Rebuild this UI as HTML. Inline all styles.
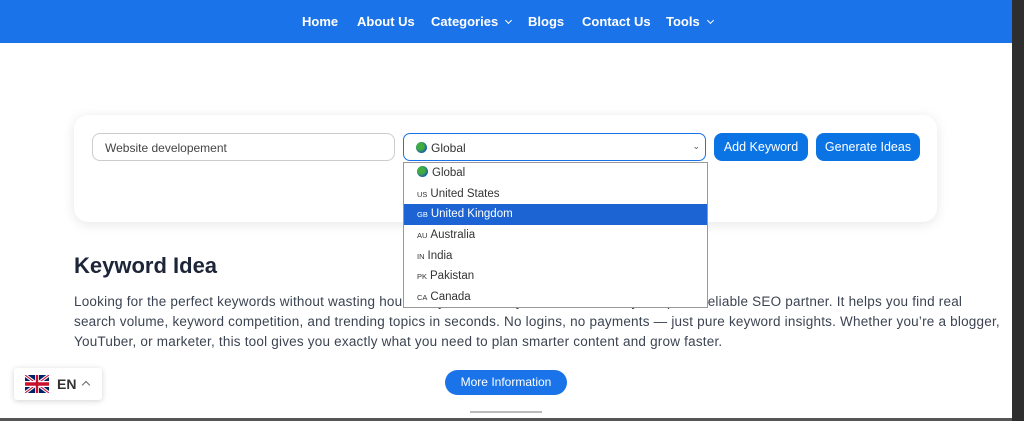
<!DOCTYPE html><html><head><style>
*{margin:0;padding:0;box-sizing:border-box}
body{width:1024px;height:421px;overflow:hidden;background:#fff;font-family:"Liberation Sans",sans-serif;position:relative}
.a{position:absolute}
.nav{left:0;top:0;width:1012px;height:43px;background:#1a73e8}
.ni{top:14px;color:#fff;font-size:13px;font-weight:bold;white-space:nowrap}
.chev{display:inline-block;width:5px;height:5px;border-right:1.2px solid #fff;border-bottom:1.2px solid #fff;transform:rotate(45deg);margin-left:8px;position:relative;top:-3px}
.card{left:74px;top:115px;width:863px;height:107px;border-radius:14px;background:#fff;box-shadow:0 2px 12px rgba(0,0,0,.1)}
.inp{left:92px;top:133px;width:303px;height:28px;border:1px solid #ccc;border-radius:8px;font-size:12px;color:#444;padding:7px 12px}
.sel{left:403px;top:133px;width:303px;height:28px;border:1.5px solid #1a73e8;border-radius:7px;font-size:12px;color:#333;padding:7px 12px}
.btn{top:133px;height:28px;background:#0b74e5;color:#fff;font-size:12.5px;border-radius:8px;text-align:center;line-height:28px}
.dd{left:403px;top:162px;width:305px;height:146px;border:1px solid #999;background:#fff}
.op{height:20.7px;font-size:11.5px;color:#333;padding-left:13px;line-height:20.7px}
.op small{font-size:7.5px;margin-right:3px}
.op.h{background:#1c64d3;color:#fff}
.globe{display:inline-block;width:11px;height:11px;border-radius:50%;background:radial-gradient(circle at 40% 40%,#3fae3f 35%,#1d5fa8 70%);vertical-align:-1px;margin-right:4px}
h1{left:74px;top:253px;font-size:22px;color:#1d2639;font-weight:bold}
.p{left:74px;top:292px;width:935px;font-size:13.5px;letter-spacing:0.21px;line-height:20px;color:#3c4452;white-space:nowrap}
.more{left:445px;top:370px;width:122px;height:25px;border-radius:13px;background:#1a73e8;color:#fff;font-size:12px;text-align:center;line-height:25px}
</style></head><body>
<div class="a nav"></div>
<div class="a ni" style="left:302px">Home</div>
<div class="a ni" style="left:357px">About Us</div>
<div class="a ni" style="left:431px">Categories<span class="chev"></span></div>
<div class="a ni" style="left:528px">Blogs</div>
<div class="a ni" style="left:582px">Contact Us</div>
<div class="a ni" style="left:666px">Tools<span class="chev"></span></div>
<div class="a card"></div>
<div class="a inp">Website developement</div>
<div class="a sel"><span class="globe"></span>Global<span style="position:absolute;right:5px;top:7px;font-size:9px;color:#555">&#8964;</span></div>
<div class="a btn" style="left:714px;width:94px">Add Keyword</div>
<div class="a btn" style="left:816px;width:104px">Generate Ideas</div>
<div class="a p">Looking for the perfect keywords without wasting hours? Try our free keyword idea tool — your quick, reliable SEO partner. It helps you find real<br>search volume, keyword competition, and trending topics in seconds. No logins, no payments — just pure keyword insights. Whether you’re a blogger,<br>YouTuber, or marketer, this tool gives you exactly what you need to plan smarter content and grow faster.</div>
<div class="a dd">
<div class="op"><span class="globe"></span>Global</div>
<div class="op"><small>US</small>United States</div>
<div class="op h"><small>GB</small>United Kingdom</div>
<div class="op"><small>AU</small>Australia</div>
<div class="op"><small>IN</small>India</div>
<div class="op"><small>PK</small>Pakistan</div>
<div class="op"><small>CA</small>Canada</div>
</div>
<h1 class="a">Keyword Idea</h1>
<div class="a more">More Information</div>
<div class="a" style="left:470px;top:411px;width:72px;height:2px;background:#bbb"></div>
<div class="a" style="left:14px;top:368px;width:88px;height:32px;background:#fff;box-shadow:0 1px 6px rgba(0,0,0,.18);border-radius:3px">
<svg class="a" style="left:11px;top:7px" width="24" height="18" viewBox="0 0 60 30" preserveAspectRatio="none"><rect width="60" height="30" fill="#012169"/><path d="M0,0L60,30M60,0L0,30" stroke="#fff" stroke-width="6"/><path d="M0,0L60,30M60,0L0,30" stroke="#C8102E" stroke-width="2"/><path d="M30,0V30M0,15H60" stroke="#fff" stroke-width="10"/><path d="M30,0V30M0,15H60" stroke="#C8102E" stroke-width="6"/></svg>
<div class="a" style="left:43px;top:8px;font-size:14px;font-weight:bold;color:#333">EN</div>
<div class="a" style="left:69px;top:14px;width:6px;height:6px;border-left:1.3px solid #666;border-top:1.3px solid #666;transform:rotate(45deg)"></div>
</div>
<div class="a" style="left:1012px;top:0;width:12px;height:421px;background:#2e2e2e"></div>
<div class="a" style="left:0;top:418px;width:1012px;height:3px;background:#555"></div>
</body></html>
